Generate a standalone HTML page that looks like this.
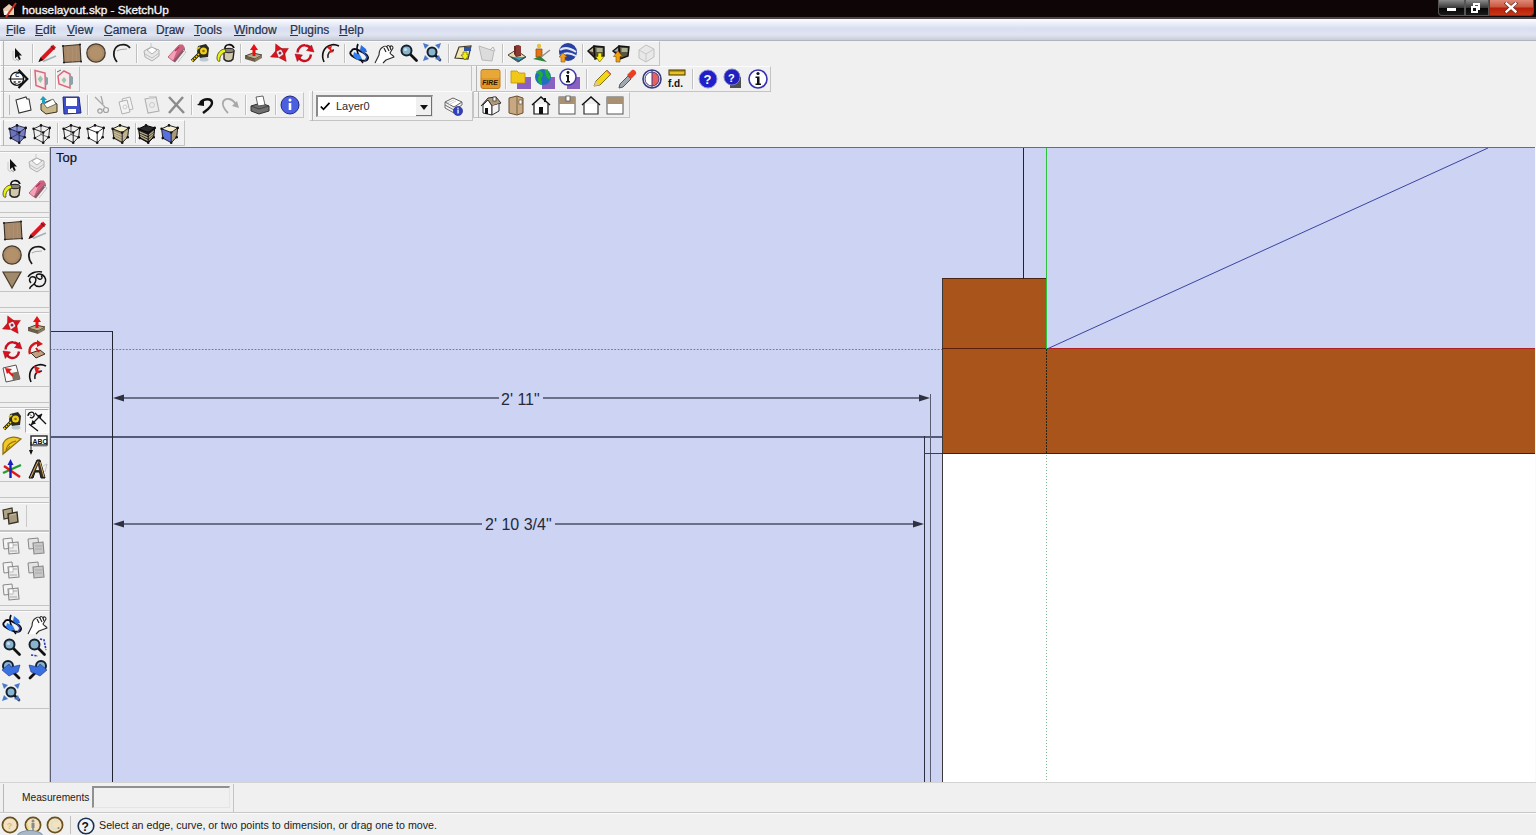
<!DOCTYPE html>
<html><head><meta charset="utf-8">
<style>
*{margin:0;padding:0;box-sizing:border-box}
html,body{width:1536px;height:835px;overflow:hidden;background:#f0f0f0;font-family:"Liberation Sans",sans-serif}
.a{position:absolute}
#title{left:0;top:0;width:1536px;height:19px;background:#0e0507;border-bottom:2px solid #4a4646}
#title .t{left:22px;top:2px;color:#f4f4f4;font-size:11.8px;line-height:16px;white-space:nowrap;-webkit-text-stroke:0.35px #f4f4f4}
#menu{left:0;top:19px;width:1536px;height:22px;background:linear-gradient(#fbfcfe 0%,#f0f3fa 15%,#d9dff0 45%,#e0e4f2 75%,#d4d8e4 88%,#c8ccd6 100%);border-bottom:1px solid #b0b4bc}
#menu span{position:absolute;top:3px;font-size:12px;line-height:16px;color:#26324c;white-space:nowrap;-webkit-text-stroke:0.2px #26324c}
#menu u{text-decoration:underline;text-underline-offset:1px;text-decoration-thickness:1px}
.tb{position:absolute;border-bottom:1px solid #d0d0d0;border-right:1px solid #c8c8c8;background:#f0f0f0}
.hd{position:absolute;width:1px;background:#c0c0c0}
.sep{position:absolute;width:1px;background:#c8c8c8;border-right:1px solid #fff}
#vp{left:50px;top:147px;width:1485px;height:636px;background:#cdd3f3;border-left:1px solid #5a5e70;border-top:1px solid #6a6e78;overflow:hidden}
#left{left:0;top:147px;width:50px;height:636px;background:#f0f0f0}
.lg{position:absolute;left:0;width:49px;border-top:1px solid #c6c6c6;border-bottom:1px solid #d4d4d4}
#status{left:0;top:782px;width:1536px;height:53px;background:#f0f0f0;border-top:1px solid #d4d4d4}
</style></head><body>
<div id="title" class="a">
  <svg class="a" style="left:1px;top:1px" width="17" height="17" viewBox="0 0 17 17">
    <path d="M2 8 L8 3 L13 7 L13 14 L3 14 Z" fill="#e8d0b0"/>
    <path d="M3 10 L7 10 L7 14 L3 14Z" fill="#f0f0f0"/>
    <path d="M5 16 L15 2" stroke="#d03020" stroke-width="2"/>
  </svg>
  <div class="a t">houselayout.skp - SketchUp</div>
  <div class="a" style="left:1438px;top:0;width:27px;height:16px;background:linear-gradient(#8a8a8a,#3a3a3a 50%,#050505 55%,#1a1a1a);border:1px solid #555;border-top:none;border-radius:0 0 0 4px"></div>
  <div class="a" style="left:1447px;top:8px;width:9px;height:3px;background:#fff"></div>
  <div class="a" style="left:1465px;top:0;width:24px;height:16px;background:linear-gradient(#8a8a8a,#3a3a3a 50%,#050505 55%,#1a1a1a);border:1px solid #555;border-top:none"></div>
  <div class="a" style="left:1473px;top:3px;width:7px;height:7px;border:2px solid #fff"></div>
  <div class="a" style="left:1471px;top:6px;width:7px;height:7px;border:2px solid #fff;background:#111"></div>
  <div class="a" style="left:1489px;top:0;width:45px;height:16px;background:linear-gradient(#e08878,#c85a40 45%,#b81e08 55%,#c83818);border:1px solid #6a3a30;border-top:none;border-radius:0 0 4px 0"></div>
  <svg class="a" style="left:1504px;top:2px" width="14" height="11" viewBox="0 0 14 11"><path d="M2.5 1.5 L11.5 9.5 M11.5 1.5 L2.5 9.5" stroke="#602018" stroke-width="3.6" stroke-linecap="square"/><path d="M2.5 1.5 L11.5 9.5 M11.5 1.5 L2.5 9.5" stroke="#fff" stroke-width="2.4" stroke-linecap="square"/></svg>
</div>
<div id="menu" class="a">
  <span style="left:6px"><u>F</u>ile</span>
  <span style="left:35px"><u>E</u>dit</span>
  <span style="left:67px"><u>V</u>iew</span>
  <span style="left:104px"><u>C</u>amera</span>
  <span style="left:156px">D<u>r</u>aw</span>
  <span style="left:194px"><u>T</u>ools</span>
  <span style="left:234px"><u>W</u>indow</span>
  <span style="left:290px"><u>P</u>lugins</span>
  <span style="left:339px"><u>H</u>elp</span>
</div>
<div class="a" style="left:0px;top:41px;width:660px;height:25px;border-top:1px solid #fbfbfb;border-left:1px solid #fbfbfb;border-bottom:1px solid #c4c4c4;border-right:1px solid #c4c4c4"></div>
<div class="a" style="left:3px;top:41px;width:1px;height:25px;background:#b4b4b4"></div>
<div class="a" style="left:32px;top:44px;width:1px;height:19px;background:#c0c0c0"></div>
<div class="a" style="left:33px;top:44px;width:1px;height:19px;background:#fcfcfc"></div>
<div class="a" style="left:136px;top:44px;width:1px;height:19px;background:#c0c0c0"></div>
<div class="a" style="left:137px;top:44px;width:1px;height:19px;background:#fcfcfc"></div>
<div class="a" style="left:240px;top:44px;width:1px;height:19px;background:#c0c0c0"></div>
<div class="a" style="left:241px;top:44px;width:1px;height:19px;background:#fcfcfc"></div>
<div class="a" style="left:344px;top:44px;width:1px;height:19px;background:#c0c0c0"></div>
<div class="a" style="left:345px;top:44px;width:1px;height:19px;background:#fcfcfc"></div>
<div class="a" style="left:448px;top:44px;width:1px;height:19px;background:#c0c0c0"></div>
<div class="a" style="left:449px;top:44px;width:1px;height:19px;background:#fcfcfc"></div>
<div class="a" style="left:502px;top:44px;width:1px;height:19px;background:#c0c0c0"></div>
<div class="a" style="left:503px;top:44px;width:1px;height:19px;background:#fcfcfc"></div>
<div class="a" style="left:582px;top:44px;width:1px;height:19px;background:#c0c0c0"></div>
<div class="a" style="left:583px;top:44px;width:1px;height:19px;background:#fcfcfc"></div>
<svg class="a" style="left:5.6px;top:42px" width="22" height="22" viewBox="0 0 22 22"><path d="M9 6 L9 16.5 L11.3 14.3 L13 18 L14.8 17.2 L13.1 13.6 L16 13.4 Z" fill="#111"/><path d="M7 9 L7 17 L10 19" stroke="#c8c8c8" stroke-width="1" fill="none"/><path d="M10 17 L13 19" stroke="#999" stroke-width="1"/></svg>
<svg class="a" style="left:35.5px;top:42px" width="22" height="22" viewBox="0 0 22 22"><path d="M2.5 20 L4.5 15.5 L17 2.5 L20 5.5 L7.5 18 Z" fill="#d81820"/><path d="M2.5 20 L4.5 15.5 L7.5 18Z" fill="#201010"/><path d="M5 15 L17 3" stroke="#ff6070" stroke-width=".8"/><path d="M15 4 L18.5 7.5" stroke="#6a2020" stroke-width="1.2"/><path d="M7 19.5 L20 14" stroke="#a0b4b4" stroke-width="1.5"/></svg>
<svg class="a" style="left:59.8px;top:42px" width="22" height="22" viewBox="0 0 22 22"><path d="M3 4 L20 2.5 L21 19.5 L4 20.5 Z" fill="#a88a6a" stroke="#3a3026" stroke-width="1.1"/><path d="M8 5 V19 M12.5 4.5 V19.5 M16.5 4 V19" stroke="#ae9070" stroke-width="1"/><circle cx="3" cy="4" r="1.1" fill="#222"/><circle cx="20" cy="2.5" r="1.1" fill="#222"/><circle cx="21" cy="19.5" r="1.1" fill="#222"/><circle cx="4" cy="20.5" r="1.1" fill="#222"/></svg>
<svg class="a" style="left:85px;top:42px" width="22" height="22" viewBox="0 0 22 22"><circle cx="11" cy="11" r="9.2" fill="#a88a68" stroke="#4a3c2c" stroke-width="1.3"/><circle cx="11" cy="11" r="6.5" fill="#b8946c" opacity=".7"/></svg>
<svg class="a" style="left:110.7px;top:42px" width="22" height="22" viewBox="0 0 22 22"><path d="M6 20 C1 14 2 5 9 3 C13 2 17 3 19 6" fill="none" stroke="#1a1a1a" stroke-width="1.8"/><path d="M6 9 C9 7 13 7 16 7" stroke="#aaa" stroke-width="1.2" fill="none"/></svg>
<svg class="a" style="left:140.5px;top:42px" width="22" height="22" viewBox="0 0 22 22"><path d="M3 9 L10 5 L18 8 L18 14 L11 19 L4 15 Z" fill="#e8e8e8" stroke="#b0b0b0" stroke-width="1"/><path d="M6 8 L11 5 L16 8 L11 12 Z" fill="#fff" stroke="#a8a8a8" stroke-width=".9"/><path d="M4 12 L11 16 L18 11" stroke="#c0c0c0" fill="none" stroke-width="1"/><path d="M10 1 V6" stroke="#c8c8c8" stroke-width="1"/></svg>
<svg class="a" style="left:165px;top:42px" width="22" height="22" viewBox="0 0 22 22"><path d="M3 15 L14 3 L18 3 L8 19 Z" fill="#f4a0b8" stroke="#c06880" stroke-width="1"/><path d="M14 3 L18 3 L19.5 5 L9.5 20 L8 19 Z" fill="#d06080"/><path d="M8 19 L19.5 5 L20 8 L10 20.5Z" fill="#8a5a68"/><path d="M10 9 L14 5" stroke="#b03058" stroke-width="1.6"/><path d="M18 8 L21 10 L13 20" stroke="#c0c8c8" stroke-width="1" fill="none"/></svg>
<svg class="a" style="left:189px;top:42px" width="22" height="22" viewBox="0 0 22 22"><path d="M9 4 L17 2 L20 6 L19 15 L11 16 L8 10Z" fill="#2a2a22"/><circle cx="14.5" cy="9" r="3.5" fill="#f0d018"/><circle cx="14.5" cy="9" r="1.3" fill="#907010"/><path d="M10 12 L3 19" stroke="#202010" stroke-width="3.4"/><path d="M10 12 L3 19" stroke="#f0d020" stroke-width="1.8" stroke-dasharray="1.6,1.1"/><ellipse cx="15" cy="17.5" rx="4.5" ry="2" fill="#a8b8c8" opacity=".7"/><path d="M8 7 L11 5" stroke="#d8c010" stroke-width="2"/></svg>
<svg class="a" style="left:214.7px;top:42px" width="22" height="22" viewBox="0 0 22 22"><path d="M9 8 C12 6 17 6 19 9 L18 17 C16 20 11 20 9 17 Z" fill="#d0c8a8" stroke="#222" stroke-width="1.4"/><ellipse cx="14" cy="8.5" rx="5" ry="2.2" fill="#888070" stroke="#222" stroke-width="1"/><path d="M10 7 C9 2 17 1 19 6" fill="none" stroke="#111" stroke-width="1.7"/><path d="M10 7 C6 7 2 11 2 16 C2 19 4 20 5 19 C4 15 7 11 11 10Z" fill="#e8f020" stroke="#404010" stroke-width=".8"/></svg>
<svg class="a" style="left:243.4px;top:42px" width="22" height="22" viewBox="0 0 22 22"><path d="M2 14 L10 11 L19 13 L12 17 Z" fill="#b8aa88" stroke="#4a4030" stroke-width="1"/><path d="M2 14 L12 17 L12 20 L2 17 Z" fill="#6a5e48"/><path d="M12 17 L19 13 L19 16 L12 20Z" fill="#857860"/><path d="M11 2 L15 8 L12.5 8 L12.5 14 L9.5 14 L9.5 8 L7 8 Z" fill="#e81010"/></svg>
<svg class="a" style="left:269px;top:42px" width="22" height="22" viewBox="0 0 22 22"><path d="M6.7 1.9 L13.0 6.7 L6.5 9.8 Z M19.4 6.4 L15.2 12.8 L11.8 6.5 Z M17.2 19.4 L10.0 15.7 L15.8 11.4 Z M1.5 14.9 L6.8 8.8 L9.5 15.5 Z " fill="#e01018" stroke="#901018" stroke-width=".5"/><circle cx="11" cy="11" r="1.5" fill="#803050"/></svg>
<svg class="a" style="left:293px;top:42px" width="22" height="22" viewBox="0 0 22 22"><path d="M4.5 10.5 C5 5 9 3 12 3.3 C15 3.5 17 5 18 7" fill="none" stroke="#c81020" stroke-width="2.4"/><path d="M18 12.5 C17.5 17 14 19.5 10.5 19 C8.5 18.7 7 17.5 6 16" fill="none" stroke="#c81020" stroke-width="2.4"/><path d="M18.5 3 L21 10 L13.5 8.5Z M2 12 L9.5 13 L4.3 19.5Z" fill="#d81020" stroke="#901018" stroke-width=".5"/></svg>
<svg class="a" style="left:318.6px;top:42px" width="22" height="22" viewBox="0 0 22 22"><path d="M5 20 C2 13 4 5 12 3 C15 2 18 3 20 4" fill="none" stroke="#111" stroke-width="1.6"/><path d="M9 16 C8 12 11 8 15 8" fill="none" stroke="#222" stroke-width="1.5"/><path d="M7 5 L13 4 L12 7 L15 10 L10 11 L11 8Z" fill="#e01818"/></svg>
<svg class="a" style="left:347.8px;top:42px" width="22" height="22" viewBox="0 0 22 22"><path d="M4 8 C6 4 11 8 15 11 C19 14 21 17 18 19 C15 21 7 16 4 13 C2 11 2 9 4 8Z" fill="none" stroke="#0a0a18" stroke-width="1.9" transform="rotate(-8 11 12)"/><path d="M10 2 C8 6 9 10 11 14 C12 17 13 19 15 21" fill="none" stroke="#0a0a18" stroke-width="1.7"/><path d="M6 10 L12 13 L14 17 L9 18 L5 14Z" fill="#3080f0"/><path d="M13 3 L18 7 L19 10 L15 11 L12 8Z" fill="#2a70e0"/><path d="M16 11 L19 15 L17 19" fill="none" stroke="#3050a0" stroke-width="1.5"/></svg>
<svg class="a" style="left:373px;top:42px" width="22" height="22" viewBox="0 0 22 22"><path d="M2 21 L6 13 C6 9 8 6 10 5 C11 4 13 4 14 5 C14 3 16 3 17 5 C18 3 20 4 20 6 L17 11 C18 13 20 13 21 15 L13 18 L10 21" fill="#fff" stroke="#2a2a2a" stroke-width="1.1" stroke-linejoin="round"/><path d="M11 6 L13 10 M14 5 L16 9 M17 5 L18 8" stroke="#2a2a2a" stroke-width="1.2"/></svg>
<svg class="a" style="left:397.5px;top:42px" width="22" height="22" viewBox="0 0 22 22"><path d="M12 12 L18.5 18.5" stroke="#111" stroke-width="2.8" stroke-linecap="round"/><circle cx="8.5" cy="8.5" r="5" fill="#88b4cc" stroke="#142030" stroke-width="2"/><circle cx="7.5" cy="7.5" r="1.6" fill="#c8e0ec"/></svg>
<svg class="a" style="left:422px;top:42px" width="22" height="22" viewBox="0 0 22 22"><path d="M12 12 L18 18" stroke="#111" stroke-width="2.6" stroke-linecap="round"/><circle cx="10" cy="10" r="4.5" fill="#88b4cc" stroke="#142030" stroke-width="2"/><path d="M1 1 L7 3 L3 7Z M19 1 L17 7 L13 3Z M1 19 L3 13 L7 17Z M19 19 L13 17 L17 13Z" fill="#4a78c8"/></svg>
<svg class="a" style="left:451.7px;top:42px" width="22" height="22" viewBox="0 0 22 22"><path d="M3 16 L7 5 L19 4 L16 17 Z" fill="#f4e8b0" stroke="#403a2a" stroke-width="1.2"/><rect x="12" y="5" width="7" height="4" fill="#3050a0"/><path d="M11 10 L15 10 L15 13 L17 13 L13 18 L9 13 L11 13Z" fill="#f0f010" stroke="#505000" stroke-width=".6"/></svg>
<svg class="a" style="left:476px;top:42px" width="22" height="22" viewBox="0 0 22 22"><path d="M3 4 L18 9 L16 19 L6 18 Z" fill="#dcdcdc" stroke="#b8b8b8" stroke-width="1"/><path d="M14 8 L17 5 L19 9" fill="none" stroke="#b0b0b0" stroke-width="1"/></svg>
<svg class="a" style="left:506px;top:42px" width="22" height="22" viewBox="0 0 22 22"><path d="M2 13 L10 8 L20 15 L12 20Z" fill="#e8dcb0" stroke="#504030" stroke-width="1"/><path d="M5 15 L13 19 L19 15" fill="#40a0b8" stroke="#206070" stroke-width="1.5"/><path d="M8 4 L13 3 L15 6 L15 14 L10 15 L8 12Z" fill="#6a2a24"/><path d="M10 3 L15 4 L15 13 L10 14Z" fill="#8a3a32"/></svg>
<svg class="a" style="left:530px;top:42px" width="22" height="22" viewBox="0 0 22 22"><circle cx="9" cy="4" r="2.2" fill="#e8c040"/><path d="M6 7 L12 7 L12 15 L6 15Z" fill="#e87010" stroke="#905010" stroke-width=".8"/><path d="M3 17 L10 14 L17 20 L12 19Z" fill="#308040"/><path d="M11 15 L20 8" stroke="#909090" stroke-width="1.5"/></svg>
<svg class="a" style="left:555.7px;top:42px" width="22" height="22" viewBox="0 0 22 22"><circle cx="12" cy="10" r="9" fill="#2840a0"/><path d="M4 8 C8 5 14 6 20 10 M5 13 C10 10 15 11 20 14" stroke="#dfe8f8" stroke-width="2" fill="none"/><path d="M7 11 L11 15 L9 15 L9 20 L5 20 L5 15 L3 15Z" fill="#f0a020" stroke="#a05000" stroke-width=".6"/></svg>
<svg class="a" style="left:585.6px;top:42px" width="22" height="22" viewBox="0 0 22 22"><path d="M2 9 L8 4 L12 6 L8 15Z" fill="#4a4030" stroke="#111" stroke-width="1.4"/><path d="M8 4 L18 5 L18 14 L9 17Z" fill="#5a5440" stroke="#111" stroke-width="1.4"/><rect x="10.5" y="6" width="6" height="4" fill="#a8b090"/><path d="M3 9 L7 6 L7 10Z" fill="#c0b498"/><path d="M12 11 L15.5 11 L15.5 14.5 L18 14.5 L13.7 20 L9.5 14.5 L12 14.5Z" fill="#f8f010" stroke="#605000" stroke-width=".6"/></svg>
<svg class="a" style="left:610px;top:42px" width="22" height="22" viewBox="0 0 22 22"><path d="M3 9 L9 4 L12 6 L9 14Z" fill="#4a4030" stroke="#111" stroke-width="1.4"/><path d="M9 4 L19 5 L18 14 L10 17Z" fill="#5a5440" stroke="#111" stroke-width="1.4"/><rect x="11.5" y="6" width="6" height="4" fill="#a8b090"/><path d="M4 9 L8 6 L8 10Z" fill="#a0a8c0"/><path d="M8 9 L12.5 14.5 L10 14.5 L10 20 L6 20 L6 14.5 L3.5 14.5Z" fill="#f0a010" stroke="#805000" stroke-width=".6"/></svg>
<svg class="a" style="left:635px;top:42px" width="22" height="22" viewBox="0 0 22 22"><path d="M4 8 L11 3 L19 7 L19 15 L11 20 L4 16Z" fill="#e8e8e8" stroke="#c0c0c0" stroke-width="1"/><path d="M4 8 L11 12 L19 7 M11 12 L11 20" stroke="#c8c8c8" stroke-width="1" fill="none"/></svg>
<div class="a" style="left:0px;top:66px;width:80px;height:26px;border-top:1px solid #fbfbfb;border-left:1px solid #fbfbfb;border-bottom:1px solid #c4c4c4;border-right:1px solid #c4c4c4"></div>
<div class="a" style="left:3px;top:66px;width:1px;height:26px;background:#b4b4b4"></div>
<div class="a" style="left:30px;top:69px;width:1px;height:20px;background:#c0c0c0"></div>
<div class="a" style="left:31px;top:69px;width:1px;height:20px;background:#fcfcfc"></div>
<div class="a" style="left:55px;top:69px;width:1px;height:20px;background:#c0c0c0"></div>
<div class="a" style="left:56px;top:69px;width:1px;height:20px;background:#fcfcfc"></div>
<svg class="a" style="left:6.7px;top:68px" width="22" height="22" viewBox="0 0 22 22"><circle cx="10" cy="10.8" r="6.6" fill="#fff" stroke="#111" stroke-width="1.3"/><path d="M1.5 11 H17" stroke="#111" stroke-width="1.1"/><path d="M11.5 1.8 L20.3 11 L11.5 20" fill="none" stroke="#111" stroke-width="2.2"/><text x="8.3" y="9.3" font-size="5.5" font-family="Liberation Sans" font-weight="bold" fill="#111">C</text><text x="6.2" y="16.6" font-size="5" font-family="Liberation Sans" font-weight="bold" fill="#111">8-S</text></svg>
<svg class="a" style="left:31px;top:68px" width="22" height="22" viewBox="0 0 22 22"><path d="M4 2.5 L14 5 L14.5 21 L5 17.5 Z" fill="#f8e8ec" stroke="#d86878" stroke-width="1.5"/><path d="M6.5 11 L9.5 7.5 L12 11 L9.5 15Z" fill="#98c8b0"/><path d="M14.5 8 L17 10 L17 16 L14.5 18Z" fill="#90a0a8"/></svg>
<svg class="a" style="left:55.4px;top:68px" width="22" height="22" viewBox="0 0 22 22"><path d="M3 8 L9 3 L15 6 L15 20 L4 16 Z" fill="#f8e8ec" stroke="#d86878" stroke-width="1.5"/><path d="M6.5 12 L9 9 L11.5 12 L9 15.5Z" fill="#98c8b0"/><path d="M15 7 L18 9 L18 16 L15 18Z" fill="#90a0a8"/><path d="M2 4 L6 2" stroke="#507080" stroke-width="1"/></svg>
<div class="a" style="left:471px;top:66px;width:300px;height:26px;border-top:1px solid #fbfbfb;border-left:1px solid #fbfbfb;border-bottom:1px solid #c4c4c4;border-right:1px solid #c4c4c4"></div>
<div class="a" style="left:476px;top:66px;width:1px;height:26px;background:#b4b4b4"></div>
<div class="a" style="left:471px;top:66px;width:1px;height:26px;background:#c4c4c4"></div>
<div class="a" style="left:505px;top:69px;width:1px;height:20px;background:#c0c0c0"></div>
<div class="a" style="left:506px;top:69px;width:1px;height:20px;background:#fcfcfc"></div>
<div class="a" style="left:586px;top:69px;width:1px;height:20px;background:#c0c0c0"></div>
<div class="a" style="left:587px;top:69px;width:1px;height:20px;background:#fcfcfc"></div>
<div class="a" style="left:692px;top:69px;width:1px;height:20px;background:#c0c0c0"></div>
<div class="a" style="left:693px;top:69px;width:1px;height:20px;background:#fcfcfc"></div>
<svg class="a" style="left:479px;top:68px" width="22" height="22" viewBox="0 0 22 22"><rect x="2" y="1.5" width="19" height="19" rx="2" fill="#e09828" stroke="#c07818" stroke-width="1"/><rect x="2.5" y="2" width="18" height="8" rx="1.5" fill="#e8a838"/><text x="3.2" y="17" font-size="6.8" font-weight="bold" font-style="italic" font-family="Liberation Sans" fill="#2a1400">FIRE</text></svg>
<svg class="a" style="left:510px;top:68px" width="22" height="22" viewBox="0 0 22 22"><rect x="7" y="9" width="14" height="12" fill="#8a60c0"/><path d="M1 3 L7 3 L9 5 L15 5 L15 15 L1 15Z" fill="#f0c818" stroke="#c09010" stroke-width=".8"/></svg>
<svg class="a" style="left:533.5px;top:68px" width="22" height="22" viewBox="0 0 22 22"><rect x="8" y="9" width="13" height="12" fill="#8a60c0"/><circle cx="9" cy="9" r="8" fill="#2070c0"/><path d="M3 5 C6 3 9 6 6 9 C4 12 8 14 6 16 M12 2 C14 5 12 8 16 10" stroke="#20b030" stroke-width="3.2" fill="none"/></svg>
<svg class="a" style="left:559px;top:68px" width="22" height="22" viewBox="0 0 22 22"><rect x="8" y="9" width="13" height="12" fill="#8a60c0"/><circle cx="9" cy="9" r="8" fill="#fff" stroke="#4038a0" stroke-width="1.5"/><circle cx="9" cy="4.5" r="1.4" fill="#111"/><path d="M7 7 H10 V13 H11 V14.5 H7 V13 H8 V8.5 H7Z" fill="#111"/></svg>
<svg class="a" style="left:591px;top:68px" width="22" height="22" viewBox="0 0 22 22"><path d="M3 18 L5 13 L16 2 L20 6 L9 17 Z" fill="#f0d818" stroke="#807010" stroke-width="1"/><path d="M15 3 L19 7 L20 6 L16 2Z" fill="#e87060"/><path d="M3 18 L5 13 L9 17Z" fill="#e8c890"/></svg>
<svg class="a" style="left:616px;top:68px" width="22" height="22" viewBox="0 0 22 22"><path d="M3 20 L4 16 L12 8 L15 11 L7 19Z" fill="#a0a8b0" stroke="#505860" stroke-width="1"/><path d="M11 7 L16 2 C18 1 21 4 20 6 L15 11Z" fill="#e84020"/></svg>
<svg class="a" style="left:640.6px;top:68px" width="22" height="22" viewBox="0 0 22 22"><circle cx="11" cy="11" r="9" fill="#fff" stroke="#3a3a80" stroke-width="1.6"/><path d="M11 4 A7 7 0 0 1 11 18Z" fill="#e86060"/><path d="M11 2 V20" stroke="#3a3a80" stroke-width="1"/><circle cx="11" cy="11" r="7" fill="none" stroke="#3a3a80" stroke-width="1"/></svg>
<svg class="a" style="left:665.7px;top:68px" width="22" height="22" viewBox="0 0 22 22"><rect x="3" y="2" width="16" height="5" fill="#e8c020" stroke="#403000" stroke-width="1"/><path d="M5 2 V4 M7 2 V4 M9 2 V4 M11 2 V4 M13 2 V4 M15 2 V4 M17 2 V4" stroke="#403000" stroke-width=".6"/><text x="2" y="19" font-size="10" font-weight="bold" font-family="Liberation Sans" fill="#111">f.d.</text></svg>
<svg class="a" style="left:696.5px;top:68px" width="22" height="22" viewBox="0 0 22 22"><circle cx="11" cy="11" r="9" fill="#2020c8" stroke="#9090e0" stroke-width="1"/><text x="6.5" y="16" font-size="13" font-weight="bold" font-family="Liberation Sans" fill="#fff">?</text></svg>
<svg class="a" style="left:721.6px;top:68px" width="22" height="22" viewBox="0 0 22 22"><rect x="8" y="9" width="11" height="11" fill="#505050"/><circle cx="10" cy="9" r="8" fill="#2020c0" stroke="#8080c0" stroke-width="1"/><text x="6" y="14" font-size="11" font-weight="bold" font-family="Liberation Sans" fill="#fff">?</text></svg>
<svg class="a" style="left:746.6px;top:68px" width="22" height="22" viewBox="0 0 22 22"><circle cx="11" cy="11" r="9" fill="#fff" stroke="#3830b0" stroke-width="1.6"/><circle cx="11" cy="5.5" r="1.6" fill="#111"/><path d="M8.5 8.5 H12.5 V15.5 H14 V17 H8.5 V15.5 H10 V10 H8.5Z" fill="#111"/></svg>
<div class="a" style="left:0px;top:92px;width:304px;height:26px;border-top:1px solid #fbfbfb;border-left:1px solid #fbfbfb;border-bottom:1px solid #c4c4c4;border-right:1px solid #c4c4c4"></div>
<div class="a" style="left:3px;top:92px;width:1px;height:26px;background:#b4b4b4"></div>
<div class="a" style="left:87px;top:95px;width:1px;height:20px;background:#c0c0c0"></div>
<div class="a" style="left:88px;top:95px;width:1px;height:20px;background:#fcfcfc"></div>
<div class="a" style="left:191px;top:95px;width:1px;height:20px;background:#c0c0c0"></div>
<div class="a" style="left:192px;top:95px;width:1px;height:20px;background:#fcfcfc"></div>
<div class="a" style="left:245px;top:95px;width:1px;height:20px;background:#c0c0c0"></div>
<div class="a" style="left:246px;top:95px;width:1px;height:20px;background:#fcfcfc"></div>
<div class="a" style="left:275px;top:95px;width:1px;height:20px;background:#c0c0c0"></div>
<div class="a" style="left:276px;top:95px;width:1px;height:20px;background:#fcfcfc"></div>
<svg class="a" style="left:12px;top:94px" width="22" height="22" viewBox="0 0 22 22"><path d="M4 6 L14 3 L15 5 L17 5 L19 16 L7 19 Z" fill="#fff" stroke="#333" stroke-width="1.1"/></svg>
<svg class="a" style="left:37.7px;top:94px" width="22" height="22" viewBox="0 0 22 22"><path d="M3 10 L13 6 L19 10 L19 18 L8 20 L3 16Z" fill="#c8b888" stroke="#3a3020" stroke-width="1"/><path d="M6 10 L15 5 L18 10 L9 14Z" fill="#fff" stroke="#555" stroke-width=".8"/><path d="M5 2 L9 6 L7 6 L7 10 L4 10 L4 6 L2 6Z" fill="#20a0c0"/></svg>
<svg class="a" style="left:61px;top:94px" width="22" height="22" viewBox="0 0 22 22"><path d="M2 3 L18 3 L20 19 L3 20Z" fill="#4050c8" stroke="#202880" stroke-width="1"/><rect x="5" y="4" width="11" height="8" fill="#fff"/><rect x="7" y="15" width="8" height="4" fill="#fff"/></svg>
<svg class="a" style="left:90.8px;top:94px" width="22" height="22" viewBox="0 0 22 22"><path d="M4 3 L14 13 M10 2 L12 10" stroke="#a8a8a8" stroke-width="1.3"/><circle cx="15" cy="16" r="2.5" fill="none" stroke="#a0a0a0" stroke-width="1.2"/><circle cx="9" cy="17" r="2.2" fill="none" stroke="#a0a0a0" stroke-width="1.2"/></svg>
<svg class="a" style="left:116px;top:94px" width="22" height="22" viewBox="0 0 22 22"><path d="M6 5 L14 3 L17 15 L9 17Z" fill="#f4f4f4" stroke="#b4b4b4" stroke-width="1"/><path d="M3 8 L11 6 L14 18 L6 20Z" fill="#f4f4f4" stroke="#b0b0b0" stroke-width="1"/><circle cx="9" cy="13" r="2" fill="none" stroke="#c0c0c0" stroke-width=".8"/></svg>
<svg class="a" style="left:140.5px;top:94px" width="22" height="22" viewBox="0 0 22 22"><path d="M4 5 L15 3 L18 17 L7 19Z" fill="#ececec" stroke="#b0b0b0" stroke-width="1.1"/><rect x="8" y="2" width="5" height="3" fill="#d0d0d0"/><circle cx="11" cy="11" r="2.5" fill="none" stroke="#c0c0c0" stroke-width=".8"/></svg>
<svg class="a" style="left:165px;top:94px" width="22" height="22" viewBox="0 0 22 22"><path d="M4 3 L19 19 M18 3 L4 19" stroke="#8c8c8c" stroke-width="2.5"/></svg>
<svg class="a" style="left:194.8px;top:94px" width="22" height="22" viewBox="0 0 22 22"><path d="M5 9 C9 4 17 4 17 9 C17 13 12 16 8 19" fill="none" stroke="#111" stroke-width="2.4"/><path d="M2 11 L9 5 L9 12Z" fill="#111"/></svg>
<svg class="a" style="left:219px;top:94px" width="22" height="22" viewBox="0 0 22 22"><path d="M17 11 C14 4 6 3 4 8 C3 12 6 16 9 19" fill="none" stroke="#a8a8a8" stroke-width="1.8"/><path d="M20 14 L13 12 L18 7Z" fill="#a8a8a8"/></svg>
<svg class="a" style="left:249px;top:94px" width="22" height="22" viewBox="0 0 22 22"><path d="M2 12 L12 9 L20 12 L20 17 L10 20 L2 17Z" fill="#707070" stroke="#303030" stroke-width="1"/><path d="M7 3 L14 2 L16 11 L9 12Z" fill="#fff" stroke="#404040" stroke-width=".8"/><path d="M2 12 L10 15 L20 12" stroke="#404040" fill="none" stroke-width="1"/></svg>
<svg class="a" style="left:279px;top:94px" width="22" height="22" viewBox="0 0 22 22"><circle cx="11" cy="11" r="9" fill="#4a60e0" stroke="#202880" stroke-width="1"/><circle cx="11" cy="6" r="1.5" fill="#fff"/><rect x="9.7" y="9" width="2.6" height="7" fill="#fff"/></svg>
<div class="a" style="left:9px;top:95px;width:1px;height:20px;background:#b8b8b8"></div>
<div class="a" style="left:309px;top:91px;width:164px;height:30px;border-top:1px solid #fbfbfb;border-left:1px solid #fbfbfb;border-bottom:1px solid #c4c4c4;border-right:1px solid #c4c4c4"></div>
<div class="a" style="left:312px;top:91px;width:1px;height:30px;background:#b4b4b4"></div>
<svg class="a" style="left:443px;top:95px" width="22" height="22" viewBox="0 0 22 22"><path d="M2 7 L10 3 L19 7 L11 12Z" fill="#fff" stroke="#606060" stroke-width="1"/><path d="M2 7 L2 10 L11 15 L19 10 L19 7" fill="none" stroke="#707070" stroke-width="1"/><path d="M2 10 L2 13 L11 18 L14 16" fill="none" stroke="#707070" stroke-width="1"/><path d="M4 8 L11 5 M5 10 L13 6" stroke="#c0c0c0" stroke-width=".8"/><circle cx="15" cy="16" r="4.6" fill="#3040c0" stroke="#202880" stroke-width=".6"/><rect x="14.3" y="14.5" width="1.5" height="4" fill="#e0e8ff"/><circle cx="15" cy="13.2" r=".8" fill="#e0e8ff"/></svg>
<div class="a" style="left:316px;top:95px;width:117px;height:22px;background:#fff;border-top:2px solid #8a8a8a;border-left:2px solid #8a8a8a;border-right:1px solid #e0e0e0;border-bottom:1px solid #e0e0e0"></div>
<div class="a" style="left:416px;top:97px;width:16px;height:19px;background:#f0f0f0;border-right:1px solid #707070;border-bottom:1px solid #707070"></div>
<div class="a" style="left:419.5px;top:105px;width:0;height:0;border-left:4.5px solid transparent;border-right:4.5px solid transparent;border-top:5px solid #111"></div>
<svg class="a" style="left:319px;top:100px" width="12" height="12" viewBox="0 0 12 12"><path d="M1.8 6.5 L4.5 9.3 L10.5 2.8" fill="none" stroke="#000" stroke-width="1.7"/></svg>
<div class="a" style="left:336px;top:98px;font-size:11px;line-height:16px;color:#2a2a2a">Layer0</div>
<div class="a" style="left:473px;top:92px;width:157px;height:26px;border-top:1px solid #fbfbfb;border-left:1px solid #fbfbfb;border-bottom:1px solid #c4c4c4;border-right:1px solid #c4c4c4"></div>
<div class="a" style="left:478px;top:92px;width:1px;height:26px;background:#b4b4b4"></div>
<div class="a" style="left:473px;top:92px;width:1px;height:26px;background:#c4c4c4"></div>
<svg class="a" style="left:480.4px;top:94px" width="22" height="22" viewBox="0 0 22 22"><path d="M1 12 L8 4 L16 3 L21 9 L12 12 L8 6Z" fill="#b0987a" stroke="#333" stroke-width="1"/><path d="M3 11 L3 19 L12 21 L12 12 L8 6Z" fill="#fff" stroke="#333" stroke-width="1"/><path d="M12 12 L12 21 L19 17 L19 10" fill="#f4f4f4" stroke="#333" stroke-width="1"/><rect x="5" y="14" width="3" height="6" fill="#111"/><rect x="13" y="3" width="3" height="4" fill="#fff" stroke="#333" stroke-width=".7"/></svg>
<svg class="a" style="left:504.7px;top:94px" width="22" height="22" viewBox="0 0 22 22"><path d="M4 4 L12 2 L18 4 L18 19 L12 21 L4 19Z" fill="#c8a880" stroke="#6a5030" stroke-width="1"/><path d="M12 2 V21" stroke="#7a6040" stroke-width="1"/><rect x="14" y="6" width="3" height="4" fill="#fff" stroke="#444" stroke-width=".6"/></svg>
<svg class="a" style="left:530px;top:94px" width="22" height="22" viewBox="0 0 22 22"><path d="M2 11 L11 3 L20 11" fill="none" stroke="#111" stroke-width="1.5"/><path d="M4 10 L4 20 L18 20 L18 10" fill="#fff" stroke="#111" stroke-width="1.2"/><rect x="9" y="13" width="4" height="7" fill="#111"/><rect x="14" y="4" width="2" height="4" fill="#111"/></svg>
<svg class="a" style="left:555.6px;top:94px" width="22" height="22" viewBox="0 0 22 22"><rect x="3" y="3" width="16" height="17" fill="#fff" stroke="#555" stroke-width="1"/><rect x="3" y="3" width="16" height="7" fill="#a89070"/><rect x="10" y="2" width="4" height="5" fill="#fff" stroke="#555" stroke-width=".8"/></svg>
<svg class="a" style="left:580px;top:94px" width="22" height="22" viewBox="0 0 22 22"><path d="M2 11 L11 3 L20 11" fill="none" stroke="#111" stroke-width="1.5"/><path d="M4 10 L4 20 L18 20 L18 10" fill="#fff" stroke="#333" stroke-width="1.2"/></svg>
<svg class="a" style="left:604px;top:94px" width="22" height="22" viewBox="0 0 22 22"><rect x="3" y="3" width="16" height="17" fill="#fff" stroke="#555" stroke-width="1"/><rect x="3" y="3" width="16" height="7" fill="#a89070"/></svg>
<div class="a" style="left:0px;top:120px;width:185px;height:26px;border-top:1px solid #fbfbfb;border-left:1px solid #fbfbfb;border-bottom:1px solid #c4c4c4;border-right:1px solid #c4c4c4"></div>
<div class="a" style="left:3px;top:120px;width:1px;height:26px;background:#b4b4b4"></div>
<div class="a" style="left:57px;top:123px;width:1px;height:20px;background:#c0c0c0"></div>
<div class="a" style="left:58px;top:123px;width:1px;height:20px;background:#fcfcfc"></div>
<div class="a" style="left:135px;top:123px;width:1px;height:20px;background:#c0c0c0"></div>
<div class="a" style="left:136px;top:123px;width:1px;height:20px;background:#fcfcfc"></div>
<svg class="a" style="left:6.7px;top:122px" width="22" height="22" viewBox="0 0 22 22"><polygon points="10,3.4 18.7,5.9 12.2,10.5 2.6,6.8" fill="#8a94d8"/><polygon points="2.6,6.8 12.2,10.5 12.2,20.7 3.8,16.1" fill="#6a74b8"/><polygon points="12.2,10.5 18.7,5.9 17.7,15.2 12.2,20.7" fill="#7880c0"/><polyline points="3.8,16.1 10,12.5 17.7,15.2" fill="none" stroke="#2a2a50" stroke-width=".7"/><polyline points="10,3.4 10,12.5" fill="none" stroke="#2a2a50" stroke-width=".7"/><polygon points="10,3.4 18.7,5.9 17.7,15.2 12.2,20.7 3.8,16.1 2.6,6.8" fill="none" stroke="#2a2a50" stroke-width="1"/><polyline points="2.6,6.8 12.2,10.5 18.7,5.9" fill="none" stroke="#2a2a50" stroke-width="1"/><polyline points="12.2,10.5 12.2,20.7" fill="none" stroke="#2a2a50" stroke-width="1"/><circle cx="10" cy="3.4" r="1.3" fill="#111"/><circle cx="2.6" cy="6.8" r="1.3" fill="#111"/><circle cx="18.7" cy="5.9" r="1.3" fill="#111"/><circle cx="12.2" cy="10.5" r="1.3" fill="#111"/><circle cx="3.8" cy="16.1" r="1.3" fill="#111"/><circle cx="17.7" cy="15.2" r="1.3" fill="#111"/><circle cx="12.2" cy="20.7" r="1.3" fill="#111"/></svg>
<svg class="a" style="left:31px;top:122px" width="22" height="22" viewBox="0 0 22 22"><polygon points="10,3.4 18.7,5.9 12.2,10.5 2.6,6.8" fill="none"/><polygon points="2.6,6.8 12.2,10.5 12.2,20.7 3.8,16.1" fill="none"/><polygon points="12.2,10.5 18.7,5.9 17.7,15.2 12.2,20.7" fill="none"/><polyline points="3.8,16.1 10,12.5 17.7,15.2" fill="none" stroke="#333" stroke-width=".7"/><polyline points="10,3.4 10,12.5" fill="none" stroke="#333" stroke-width=".7"/><polygon points="10,3.4 18.7,5.9 17.7,15.2 12.2,20.7 3.8,16.1 2.6,6.8" fill="none" stroke="#333" stroke-width="1"/><polyline points="2.6,6.8 12.2,10.5 18.7,5.9" fill="none" stroke="#333" stroke-width="1"/><polyline points="12.2,10.5 12.2,20.7" fill="none" stroke="#333" stroke-width="1"/><circle cx="10" cy="3.4" r="1.3" fill="#111"/><circle cx="2.6" cy="6.8" r="1.3" fill="#111"/><circle cx="18.7" cy="5.9" r="1.3" fill="#111"/><circle cx="12.2" cy="10.5" r="1.3" fill="#111"/><circle cx="3.8" cy="16.1" r="1.3" fill="#111"/><circle cx="17.7" cy="15.2" r="1.3" fill="#111"/><circle cx="12.2" cy="20.7" r="1.3" fill="#111"/></svg>
<svg class="a" style="left:61px;top:122px" width="22" height="22" viewBox="0 0 22 22"><polygon points="10,3.4 18.7,5.9 12.2,10.5 2.6,6.8" fill="none"/><polygon points="2.6,6.8 12.2,10.5 12.2,20.7 3.8,16.1" fill="none"/><polygon points="12.2,10.5 18.7,5.9 17.7,15.2 12.2,20.7" fill="none"/><polyline points="3.8,16.1 10,12.5 17.7,15.2" fill="none" stroke="#222" stroke-width=".7"/><polyline points="10,3.4 10,12.5" fill="none" stroke="#222" stroke-width=".7"/><polygon points="10,3.4 18.7,5.9 17.7,15.2 12.2,20.7 3.8,16.1 2.6,6.8" fill="none" stroke="#222" stroke-width="1"/><polyline points="2.6,6.8 12.2,10.5 18.7,5.9" fill="none" stroke="#222" stroke-width="1"/><polyline points="12.2,10.5 12.2,20.7" fill="none" stroke="#222" stroke-width="1"/><circle cx="10" cy="3.4" r="1.3" fill="#111"/><circle cx="2.6" cy="6.8" r="1.3" fill="#111"/><circle cx="18.7" cy="5.9" r="1.3" fill="#111"/><circle cx="12.2" cy="10.5" r="1.3" fill="#111"/><circle cx="3.8" cy="16.1" r="1.3" fill="#111"/><circle cx="17.7" cy="15.2" r="1.3" fill="#111"/><circle cx="12.2" cy="20.7" r="1.3" fill="#111"/></svg>
<svg class="a" style="left:85px;top:122px" width="22" height="22" viewBox="0 0 22 22"><polygon points="10,3.4 18.7,5.9 12.2,10.5 2.6,6.8" fill="#fff"/><polygon points="2.6,6.8 12.2,10.5 12.2,20.7 3.8,16.1" fill="#fff"/><polygon points="12.2,10.5 18.7,5.9 17.7,15.2 12.2,20.7" fill="#fff"/><polygon points="10,3.4 18.7,5.9 17.7,15.2 12.2,20.7 3.8,16.1 2.6,6.8" fill="none" stroke="#333" stroke-width="1"/><polyline points="2.6,6.8 12.2,10.5 18.7,5.9" fill="none" stroke="#333" stroke-width="1"/><polyline points="12.2,10.5 12.2,20.7" fill="none" stroke="#333" stroke-width="1"/><circle cx="10" cy="3.4" r="1.3" fill="#111"/><circle cx="2.6" cy="6.8" r="1.3" fill="#111"/><circle cx="18.7" cy="5.9" r="1.3" fill="#111"/><circle cx="12.2" cy="10.5" r="1.3" fill="#111"/><circle cx="3.8" cy="16.1" r="1.3" fill="#111"/><circle cx="17.7" cy="15.2" r="1.3" fill="#111"/><circle cx="12.2" cy="20.7" r="1.3" fill="#111"/></svg>
<svg class="a" style="left:109.6px;top:122px" width="22" height="22" viewBox="0 0 22 22"><polygon points="10,3.4 18.7,5.9 12.2,10.5 2.6,6.8" fill="#f4f0c8"/><polygon points="2.6,6.8 12.2,10.5 12.2,20.7 3.8,16.1" fill="#988a6a"/><polygon points="12.2,10.5 18.7,5.9 17.7,15.2 12.2,20.7" fill="#a89a78"/><polyline points="2.96,9.59 12.2,13.56 18.4,8.69" fill="none" stroke="#c8bc98" stroke-width="1.4"/><polyline points="3.26,11.915 12.2,16.11 18.15,11.015" fill="none" stroke="#c8bc98" stroke-width="1.4"/><polyline points="3.56,14.24 12.2,18.66 17.9,13.34" fill="none" stroke="#c8bc98" stroke-width="1.4"/><polygon points="10,3.4 18.7,5.9 17.7,15.2 12.2,20.7 3.8,16.1 2.6,6.8" fill="none" stroke="#222" stroke-width="1"/><polyline points="2.6,6.8 12.2,10.5 18.7,5.9" fill="none" stroke="#222" stroke-width="1"/><polyline points="12.2,10.5 12.2,20.7" fill="none" stroke="#222" stroke-width="1"/><circle cx="10" cy="3.4" r="1.3" fill="#111"/><circle cx="2.6" cy="6.8" r="1.3" fill="#111"/><circle cx="18.7" cy="5.9" r="1.3" fill="#111"/><circle cx="12.2" cy="10.5" r="1.3" fill="#111"/><circle cx="3.8" cy="16.1" r="1.3" fill="#111"/><circle cx="17.7" cy="15.2" r="1.3" fill="#111"/><circle cx="12.2" cy="20.7" r="1.3" fill="#111"/></svg>
<svg class="a" style="left:136px;top:122px" width="22" height="22" viewBox="0 0 22 22"><polygon points="10,3.4 18.7,5.9 12.2,10.5 2.6,6.8" fill="#2a2a2a"/><polygon points="2.6,6.8 12.2,10.5 12.2,20.7 3.8,16.1" fill="#1a1a1a"/><polygon points="12.2,10.5 18.7,5.9 17.7,15.2 12.2,20.7" fill="#1a1a1a"/><polyline points="2.96,9.59 12.2,13.56 18.4,8.69" fill="none" stroke="#b8aa88" stroke-width="1.4"/><polyline points="3.26,11.915 12.2,16.11 18.15,11.015" fill="none" stroke="#b8aa88" stroke-width="1.4"/><polyline points="3.56,14.24 12.2,18.66 17.9,13.34" fill="none" stroke="#b8aa88" stroke-width="1.4"/><polygon points="10,3.4 18.7,5.9 17.7,15.2 12.2,20.7 3.8,16.1 2.6,6.8" fill="none" stroke="#000" stroke-width="1"/><polyline points="2.6,6.8 12.2,10.5 18.7,5.9" fill="none" stroke="#000" stroke-width="1"/><polyline points="12.2,10.5 12.2,20.7" fill="none" stroke="#000" stroke-width="1"/><circle cx="10" cy="3.4" r="1.3" fill="#111"/><circle cx="2.6" cy="6.8" r="1.3" fill="#111"/><circle cx="18.7" cy="5.9" r="1.3" fill="#111"/><circle cx="12.2" cy="10.5" r="1.3" fill="#111"/><circle cx="3.8" cy="16.1" r="1.3" fill="#111"/><circle cx="17.7" cy="15.2" r="1.3" fill="#111"/><circle cx="12.2" cy="20.7" r="1.3" fill="#111"/></svg>
<svg class="a" style="left:159px;top:122px" width="22" height="22" viewBox="0 0 22 22"><polygon points="10,3.4 18.7,5.9 12.2,10.5 2.6,6.8" fill="#f4f0d0"/><polygon points="2.6,6.8 12.2,10.5 12.2,20.7 3.8,16.1" fill="#5a70e0"/><polygon points="12.2,10.5 18.7,5.9 17.7,15.2 12.2,20.7" fill="#a89a78"/><polygon points="10,3.4 18.7,5.9 17.7,15.2 12.2,20.7 3.8,16.1 2.6,6.8" fill="none" stroke="#222" stroke-width="1"/><polyline points="2.6,6.8 12.2,10.5 18.7,5.9" fill="none" stroke="#222" stroke-width="1"/><polyline points="12.2,10.5 12.2,20.7" fill="none" stroke="#222" stroke-width="1"/><circle cx="10" cy="3.4" r="1.3" fill="#111"/><circle cx="2.6" cy="6.8" r="1.3" fill="#111"/><circle cx="18.7" cy="5.9" r="1.3" fill="#111"/><circle cx="12.2" cy="10.5" r="1.3" fill="#111"/><circle cx="3.8" cy="16.1" r="1.3" fill="#111"/><circle cx="17.7" cy="15.2" r="1.3" fill="#111"/><circle cx="12.2" cy="20.7" r="1.3" fill="#111"/></svg>
<div class="a" style="left:0px;top:151px;width:50px;height:51px;border-top:1px solid #c4c4c4;border-bottom:1px solid #c4c4c4;border-right:1px solid #c8c8c8"></div>
<div class="a" style="left:0px;top:152px;width:49px;height:1px;background:#fbfbfb"></div>
<svg class="a" style="left:1px;top:153px" width="22" height="22" viewBox="0 0 22 22"><path d="M9 6 L9 16.5 L11.3 14.3 L13 18 L14.8 17.2 L13.1 13.6 L16 13.4 Z" fill="#111"/><path d="M7 9 L7 17 L10 19" stroke="#c8c8c8" stroke-width="1" fill="none"/><path d="M10 17 L13 19" stroke="#999" stroke-width="1"/></svg>
<svg class="a" style="left:26px;top:153px" width="22" height="22" viewBox="0 0 22 22"><path d="M3 9 L10 5 L18 8 L18 14 L11 19 L4 15 Z" fill="#e8e8e8" stroke="#b0b0b0" stroke-width="1"/><path d="M6 8 L11 5 L16 8 L11 12 Z" fill="#fff" stroke="#a8a8a8" stroke-width=".9"/><path d="M4 12 L11 16 L18 11" stroke="#c0c0c0" fill="none" stroke-width="1"/><path d="M10 1 V6" stroke="#c8c8c8" stroke-width="1"/></svg>
<svg class="a" style="left:1px;top:178px" width="22" height="22" viewBox="0 0 22 22"><path d="M9 8 C12 6 17 6 19 9 L18 17 C16 20 11 20 9 17 Z" fill="#d0c8a8" stroke="#222" stroke-width="1.4"/><ellipse cx="14" cy="8.5" rx="5" ry="2.2" fill="#888070" stroke="#222" stroke-width="1"/><path d="M10 7 C9 2 17 1 19 6" fill="none" stroke="#111" stroke-width="1.7"/><path d="M10 7 C6 7 2 11 2 16 C2 19 4 20 5 19 C4 15 7 11 11 10Z" fill="#e8f020" stroke="#404010" stroke-width=".8"/></svg>
<svg class="a" style="left:26px;top:178px" width="22" height="22" viewBox="0 0 22 22"><path d="M3 15 L14 3 L18 3 L8 19 Z" fill="#f4a0b8" stroke="#c06880" stroke-width="1"/><path d="M14 3 L18 3 L19.5 5 L9.5 20 L8 19 Z" fill="#d06080"/><path d="M8 19 L19.5 5 L20 8 L10 20.5Z" fill="#8a5a68"/><path d="M10 9 L14 5" stroke="#b03058" stroke-width="1.6"/><path d="M18 8 L21 10 L13 20" stroke="#c0c8c8" stroke-width="1" fill="none"/></svg>
<div class="a" style="left:0px;top:212px;width:49px;height:1px;background:#c4c4c4"></div>
<div class="a" style="left:0px;top:217px;width:50px;height:75px;border-top:1px solid #c4c4c4;border-bottom:1px solid #c4c4c4;border-right:1px solid #c8c8c8"></div>
<div class="a" style="left:0px;top:218px;width:49px;height:1px;background:#fbfbfb"></div>
<svg class="a" style="left:1px;top:219px" width="22" height="22" viewBox="0 0 22 22"><path d="M3 4 L20 2.5 L21 19.5 L4 20.5 Z" fill="#a88a6a" stroke="#3a3026" stroke-width="1.1"/><path d="M8 5 V19 M12.5 4.5 V19.5 M16.5 4 V19" stroke="#ae9070" stroke-width="1"/><circle cx="3" cy="4" r="1.1" fill="#222"/><circle cx="20" cy="2.5" r="1.1" fill="#222"/><circle cx="21" cy="19.5" r="1.1" fill="#222"/><circle cx="4" cy="20.5" r="1.1" fill="#222"/></svg>
<svg class="a" style="left:26px;top:219px" width="22" height="22" viewBox="0 0 22 22"><path d="M2.5 20 L4.5 15.5 L17 2.5 L20 5.5 L7.5 18 Z" fill="#d81820"/><path d="M2.5 20 L4.5 15.5 L7.5 18Z" fill="#201010"/><path d="M5 15 L17 3" stroke="#ff6070" stroke-width=".8"/><path d="M15 4 L18.5 7.5" stroke="#6a2020" stroke-width="1.2"/><path d="M7 19.5 L20 14" stroke="#a0b4b4" stroke-width="1.5"/></svg>
<svg class="a" style="left:1px;top:244px" width="22" height="22" viewBox="0 0 22 22"><circle cx="11" cy="11" r="9.2" fill="#a88a68" stroke="#4a3c2c" stroke-width="1.3"/><circle cx="11" cy="11" r="6.5" fill="#b8946c" opacity=".7"/></svg>
<svg class="a" style="left:26px;top:244px" width="22" height="22" viewBox="0 0 22 22"><path d="M6 20 C1 14 2 5 9 3 C13 2 17 3 19 6" fill="none" stroke="#1a1a1a" stroke-width="1.8"/><path d="M6 9 C9 7 13 7 16 7" stroke="#aaa" stroke-width="1.2" fill="none"/></svg>
<svg class="a" style="left:1px;top:268px" width="22" height="22" viewBox="0 0 22 22"><path d="M2 4 L20 4 L11 20Z" fill="#a08a6a" stroke="#4a3c2c" stroke-width="1.2"/></svg>
<svg class="a" style="left:26px;top:268px" width="22" height="22" viewBox="0 0 22 22"><path d="M5 15 C2 12 4 8 8 9 C11 10 10 14 8 16 C6 18 3 19 4 21 M8 16 C11 20 17 19 19 15 C21 11 18 6 13 6 C9 6 10 10 13 11 C16 12 17 9 15 8 M2 9 C5 4 12 3 16 4" fill="none" stroke="#111" stroke-width="1.4"/></svg>
<div class="a" style="left:0px;top:307px;width:49px;height:1px;background:#c4c4c4"></div>
<div class="a" style="left:0px;top:312px;width:50px;height:75px;border-top:1px solid #c4c4c4;border-bottom:1px solid #c4c4c4;border-right:1px solid #c8c8c8"></div>
<div class="a" style="left:0px;top:313px;width:49px;height:1px;background:#fbfbfb"></div>
<svg class="a" style="left:1px;top:314px" width="22" height="22" viewBox="0 0 22 22"><path d="M6.7 1.9 L13.0 6.7 L6.5 9.8 Z M19.4 6.4 L15.2 12.8 L11.8 6.5 Z M17.2 19.4 L10.0 15.7 L15.8 11.4 Z M1.5 14.9 L6.8 8.8 L9.5 15.5 Z " fill="#e01018" stroke="#901018" stroke-width=".5"/><circle cx="11" cy="11" r="1.5" fill="#803050"/></svg>
<svg class="a" style="left:26px;top:314px" width="22" height="22" viewBox="0 0 22 22"><path d="M2 14 L10 11 L19 13 L12 17 Z" fill="#b8aa88" stroke="#4a4030" stroke-width="1"/><path d="M2 14 L12 17 L12 20 L2 17 Z" fill="#6a5e48"/><path d="M12 17 L19 13 L19 16 L12 20Z" fill="#857860"/><path d="M11 2 L15 8 L12.5 8 L12.5 14 L9.5 14 L9.5 8 L7 8 Z" fill="#e81010"/></svg>
<svg class="a" style="left:1px;top:339px" width="22" height="22" viewBox="0 0 22 22"><path d="M4.5 10.5 C5 5 9 3 12 3.3 C15 3.5 17 5 18 7" fill="none" stroke="#c81020" stroke-width="2.4"/><path d="M18 12.5 C17.5 17 14 19.5 10.5 19 C8.5 18.7 7 17.5 6 16" fill="none" stroke="#c81020" stroke-width="2.4"/><path d="M18.5 3 L21 10 L13.5 8.5Z M2 12 L9.5 13 L4.3 19.5Z" fill="#d81020" stroke="#901018" stroke-width=".5"/></svg>
<svg class="a" style="left:26px;top:339px" width="22" height="22" viewBox="0 0 22 22"><path d="M4 15 C2 9 7 3 13 4" fill="none" stroke="#d01818" stroke-width="2.4"/><path d="M5 14 L14 11 L19 15 L10 19Z" fill="#c0a080" stroke="#403020" stroke-width="1"/><path d="M11 1 L17 5 L11 8Z" fill="#d01818"/><path d="M10 9 L13 13" stroke="#d01818" stroke-width="2"/></svg>
<svg class="a" style="left:1px;top:362px" width="22" height="22" viewBox="0 0 22 22"><path d="M2 6 L15 3 L19 17 L5 20Z" fill="#f8f8f8" stroke="#555" stroke-width="1"/><path d="M10.5 11 L17 9.5 L19 17 L12 18.5Z" fill="#807060"/><path d="M4 6 L11 7 L6 12Z" fill="#e01818"/><path d="M6 8 L12 14" stroke="#e01818" stroke-width="1.8"/></svg>
<svg class="a" style="left:26px;top:362px" width="22" height="22" viewBox="0 0 22 22"><path d="M5 20 C2 13 4 5 12 3 C15 2 18 3 20 4" fill="none" stroke="#111" stroke-width="1.6"/><path d="M9 17 C8 12 11 9 16 9" fill="none" stroke="#222" stroke-width="1.5"/><path d="M8 4 L14 6 L12 8 L15 11 L10 11 L9 8Z" fill="#e01818"/></svg>
<div class="a" style="left:0px;top:402px;width:49px;height:1px;background:#c4c4c4"></div>
<div class="a" style="left:0px;top:407px;width:50px;height:75px;border-top:1px solid #c4c4c4;border-bottom:1px solid #c4c4c4;border-right:1px solid #c8c8c8"></div>
<div class="a" style="left:0px;top:408px;width:49px;height:1px;background:#fbfbfb"></div>
<svg class="a" style="left:1px;top:410px" width="22" height="22" viewBox="0 0 22 22"><path d="M9 4 L17 2 L20 6 L19 15 L11 16 L8 10Z" fill="#2a2a22"/><circle cx="14.5" cy="9" r="3.5" fill="#f0d018"/><circle cx="14.5" cy="9" r="1.3" fill="#907010"/><path d="M10 12 L3 19" stroke="#202010" stroke-width="3.4"/><path d="M10 12 L3 19" stroke="#f0d020" stroke-width="1.8" stroke-dasharray="1.6,1.1"/><ellipse cx="15" cy="17.5" rx="4.5" ry="2" fill="#a8b8c8" opacity=".7"/><path d="M8 7 L11 5" stroke="#d8c010" stroke-width="2"/></svg>
<svg class="a" style="left:1px;top:433.5px" width="22" height="22" viewBox="0 0 22 22"><path d="M2 20 L2 10 C4 4 12 1 20 5 Z" fill="#f0c828" stroke="#907010" stroke-width="1.3"/><path d="M5 16 C6 11 10 8 15 7" fill="none" stroke="#907010" stroke-width="1.2"/><path d="M2 20 L9 12" stroke="#907010" stroke-width="1"/></svg>
<svg class="a" style="left:26px;top:433.5px" width="22" height="22" viewBox="0 0 22 22"><rect x="5" y="2" width="16" height="9" fill="#fff" stroke="#222" stroke-width="1.4"/><text x="6.6" y="9.6" font-size="6.8" font-weight="bold" font-family="Liberation Sans" fill="#111">ABC</text><path d="M5 8 V19" stroke="#222" stroke-width="1"/><path d="M3 16 L5 21 L7 16Z" fill="#111"/><path d="M7 12 H21" stroke="#888" stroke-width="1"/></svg>
<svg class="a" style="left:1px;top:458px" width="22" height="22" viewBox="0 0 22 22"><path d="M2 15 L20 7" stroke="#20a030" stroke-width="2.4"/><path d="M3 8 L19 19" stroke="#e01818" stroke-width="2.4"/><path d="M9.5 4 L9.5 20" stroke="#1820c0" stroke-width="2.4"/><path d="M6.5 7 L9.5 1 L12.5 7Z" fill="#1820c0"/></svg>
<svg class="a" style="left:26px;top:458px" width="22" height="22" viewBox="0 0 22 22"><path d="M3 20 L11 2 L14 2 L19 20 L15 20 L13.5 14 L9 14 L7 20Z" fill="#3a3024" stroke="#111" stroke-width="1"/><path d="M4.5 19.5 L12 3.5 M14 4 L18 19" stroke="#d8b060" stroke-width="1"/><path d="M10 12 L13 12 L12 7Z" fill="#f0f0f0"/><path d="M17 8 L21 6 L19 14" fill="none" stroke="#bbb" stroke-width=".8"/></svg>
<div class="a" style="left:25px;top:409px;width:24px;height:24px;background:#f8f8f8;border:1px solid #a8a8a8;border-right-color:#fff;border-bottom-color:#fff"></div>
<svg class="a" style="left:26px;top:410px" width="22" height="22" viewBox="0 0 22 22"><path d="M5 15 L16 4" stroke="#111" stroke-width="1.2"/><path d="M9 3 L20 14 M3 14 L12 21" stroke="#111" stroke-width="1.3"/><path d="M16 4 L11 5.5 L14.5 9Z M5 15 L6.5 10 L10 13.5Z" fill="#111"/><path d="M2 6 C2 2 7 1 8 4 C9 7 5 9 4 7" fill="none" stroke="#111" stroke-width="1.3"/><path d="M3 4 L6 6" stroke="#608060" stroke-width="1"/></svg>
<div class="a" style="left:0px;top:497px;width:49px;height:1px;background:#c4c4c4"></div>
<div class="a" style="left:0px;top:502px;width:50px;height:29px;border-top:1px solid #c4c4c4;border-bottom:1px solid #c4c4c4;border-right:1px solid #c8c8c8"></div>
<div class="a" style="left:0px;top:503px;width:49px;height:1px;background:#fbfbfb"></div>
<svg class="a" style="left:1px;top:505px" width="22" height="22" viewBox="0 0 22 22"><path d="M2 5 L11 3 L12 12 L3 14Z" fill="#b0a488" stroke="#3a3226" stroke-width="1.2"/><path d="M7 9 L16 7 L17 17 L8 19Z" fill="#a89c80" stroke="#3a3226" stroke-width="1.4"/><path d="M9 10 L15 9" stroke="#c8bca0" stroke-width="1"/></svg>
<div class="a" style="left:26px;top:505px;width:1px;height:22px;background:#c8c8c8"></div>
<div class="a" style="left:0px;top:531px;width:50px;height:75px;border-top:1px solid #c4c4c4;border-bottom:1px solid #c4c4c4;border-right:1px solid #c8c8c8"></div>
<div class="a" style="left:0px;top:532px;width:49px;height:1px;background:#fbfbfb"></div>
<svg class="a" style="left:1px;top:534px" width="22" height="22" viewBox="0 0 22 22"><path d="M2 5 L11 4 L12 14 L3 15Z" fill="#f4f4f4" stroke="#888" stroke-width="1"/><path d="M7 9 L17 8 L18 19 L8 20Z" fill="#ececec" stroke="#888" stroke-width="1.1"/><path d="M9 11 H16 M9 17 H16" stroke="#aaa" stroke-width="1"/><rect x="8" y="9" width="4" height="5" fill="#fff" stroke="#999" stroke-width=".6"/></svg>
<svg class="a" style="left:26px;top:534px" width="22" height="22" viewBox="0 0 22 22"><path d="M2 5 L12 4 L13 14 L3 15Z" fill="#e4e4e4" stroke="#888" stroke-width="1"/><path d="M7 9 L17 8 L18 19 L8 20Z" fill="#c8c8c8" stroke="#888" stroke-width="1.1"/><path d="M9 12 H16 M9 15 H16" stroke="#a8a8a8" stroke-width="1"/></svg>
<svg class="a" style="left:1px;top:558px" width="22" height="22" viewBox="0 0 22 22"><path d="M2 5 L11 4 L12 14 L3 15Z" fill="#f4f4f4" stroke="#888" stroke-width="1"/><path d="M7 9 L17 8 L18 19 L8 20Z" fill="#ececec" stroke="#888" stroke-width="1.1"/><path d="M9 11 H16 M9 17 H16" stroke="#aaa" stroke-width="1"/><rect x="8" y="9" width="4" height="5" fill="#fff" stroke="#999" stroke-width=".6"/></svg>
<svg class="a" style="left:26px;top:558px" width="22" height="22" viewBox="0 0 22 22"><path d="M2 5 L12 4 L13 14 L3 15Z" fill="#e4e4e4" stroke="#888" stroke-width="1"/><path d="M7 9 L17 8 L18 19 L8 20Z" fill="#c8c8c8" stroke="#888" stroke-width="1.1"/><path d="M9 12 H16 M9 15 H16" stroke="#a8a8a8" stroke-width="1"/></svg>
<svg class="a" style="left:1px;top:580px" width="22" height="22" viewBox="0 0 22 22"><path d="M2 5 L11 4 L12 14 L3 15Z" fill="#f4f4f4" stroke="#888" stroke-width="1"/><path d="M7 9 L17 8 L18 19 L8 20Z" fill="#ececec" stroke="#888" stroke-width="1.1"/><path d="M9 11 H16 M9 17 H16" stroke="#aaa" stroke-width="1"/><rect x="8" y="9" width="4" height="5" fill="#fff" stroke="#999" stroke-width=".6"/></svg>
<div class="a" style="left:0px;top:610px;width:50px;height:99px;border-top:1px solid #c4c4c4;border-bottom:1px solid #c4c4c4;border-right:1px solid #c8c8c8"></div>
<div class="a" style="left:0px;top:611px;width:49px;height:1px;background:#fbfbfb"></div>
<svg class="a" style="left:1px;top:613px" width="22" height="22" viewBox="0 0 22 22"><path d="M4 8 C6 4 11 8 15 11 C19 14 21 17 18 19 C15 21 7 16 4 13 C2 11 2 9 4 8Z" fill="none" stroke="#0a0a18" stroke-width="1.9" transform="rotate(-8 11 12)"/><path d="M10 2 C8 6 9 10 11 14 C12 17 13 19 15 21" fill="none" stroke="#0a0a18" stroke-width="1.7"/><path d="M6 10 L12 13 L14 17 L9 18 L5 14Z" fill="#3080f0"/><path d="M13 3 L18 7 L19 10 L15 11 L12 8Z" fill="#2a70e0"/><path d="M16 11 L19 15 L17 19" fill="none" stroke="#3050a0" stroke-width="1.5"/></svg>
<svg class="a" style="left:26px;top:613px" width="22" height="22" viewBox="0 0 22 22"><path d="M2 21 L6 13 C6 9 8 6 10 5 C11 4 13 4 14 5 C14 3 16 3 17 5 C18 3 20 4 20 6 L17 11 C18 13 20 13 21 15 L13 18 L10 21" fill="#fff" stroke="#2a2a2a" stroke-width="1.1" stroke-linejoin="round"/><path d="M11 6 L13 10 M14 5 L16 9 M17 5 L18 8" stroke="#2a2a2a" stroke-width="1.2"/></svg>
<svg class="a" style="left:1px;top:636px" width="22" height="22" viewBox="0 0 22 22"><path d="M12 12 L18.5 18.5" stroke="#111" stroke-width="2.8" stroke-linecap="round"/><circle cx="8.5" cy="8.5" r="5" fill="#88b4cc" stroke="#142030" stroke-width="2"/><circle cx="7.5" cy="7.5" r="1.6" fill="#c8e0ec"/></svg>
<svg class="a" style="left:26px;top:636px" width="22" height="22" viewBox="0 0 22 22"><path d="M12 12 L18.5 18.5" stroke="#111" stroke-width="2.8" stroke-linecap="round"/><circle cx="8.5" cy="8.5" r="5" fill="#88b4cc" stroke="#142030" stroke-width="2"/><path d="M14 3 L18 4 L20 14 M5 19 L12 20" fill="none" stroke="#2838b0" stroke-width="1.6" stroke-dasharray="2.2,1.2"/></svg>
<svg class="a" style="left:1px;top:659px" width="22" height="22" viewBox="0 0 22 22"><path d="M10 11 L18 19" stroke="#111" stroke-width="2.8" stroke-linecap="round"/><circle cx="7" cy="7" r="5" fill="#88b4cc" stroke="#142030" stroke-width="2"/><path d="M1 11 L8 5 L10 8 L19 6 L17 13 L12 15 L8 17Z" fill="#3a70e0" stroke="#1a3080" stroke-width=".6"/></svg>
<svg class="a" style="left:26px;top:659px" width="22" height="22" viewBox="0 0 22 22"><path d="M12 11 L4 19" stroke="#111" stroke-width="2.8" stroke-linecap="round"/><circle cx="15" cy="7" r="5" fill="#88b4cc" stroke="#142030" stroke-width="2"/><path d="M21 11 L14 5 L12 8 L3 6 L5 13 L10 15 L14 17Z" fill="#3a70e0" stroke="#1a3080" stroke-width=".6"/></svg>
<svg class="a" style="left:1px;top:682px" width="22" height="22" viewBox="0 0 22 22"><path d="M12 12 L18 18" stroke="#111" stroke-width="2.6" stroke-linecap="round"/><circle cx="10" cy="10" r="4.5" fill="#88b4cc" stroke="#142030" stroke-width="2"/><path d="M1 1 L7 3 L3 7Z M19 1 L17 7 L13 3Z M1 19 L3 13 L7 17Z M19 19 L13 17 L17 13Z" fill="#4a78c8"/></svg>
<div class="a" style="left:1535px;top:147px;width:1px;height:636px;background:#fafafa"></div>
<div class="a" style="left:49px;top:147px;width:1px;height:635px;background:#c8c8c8"></div>
<!-- VIEWPORT -->
<div id="vp" class="a">
  <div class="a" style="left:5px;top:2px;font-size:13px;color:#101018;line-height:16px;-webkit-text-stroke:0.2px #101018">Top</div>
<svg class="a" style="left:-51px;top:-148px" width="1536" height="835" viewBox="0 0 1536 835" shape-rendering="crispEdges">
  <rect x="943" y="454" width="592" height="329" fill="#ffffff"/>
  <rect x="942" y="279" width="105" height="175" fill="#a9541a"/>
  <rect x="942" y="349" width="593" height="105" fill="#a9541a"/>
  <rect x="942" y="278" width="105" height="1" fill="#4a2410"/>
  <rect x="942" y="279" width="1" height="504" fill="#3a3838"/>
  <rect x="942" y="348" width="105" height="1" fill="#5a1e0a"/>
  <rect x="1047" y="348" width="488" height="1" fill="#b02020"/>
  <rect x="942" y="453" width="593" height="1" fill="#3a2418"/>
  <rect x="1023" y="148" width="1" height="131" fill="#20242e"/>
  <rect x="1046" y="148" width="1" height="201" fill="#30c040"/>
  <line x1="1046.5" y1="349" x2="1046.5" y2="453" stroke="#2a2410" stroke-width="1" stroke-dasharray="2,1"/>
  <line x1="1046.5" y1="455" x2="1046.5" y2="783" stroke="#80b890" stroke-width="1" stroke-dasharray="1,2"/>
  <rect x="50" y="436" width="892" height="2" fill="#545a78"/>
  <rect x="50" y="331" width="62" height="1" fill="#2c3040"/>
  <rect x="112" y="331" width="1" height="452" fill="#20242e"/>
  <line x1="50" y1="349.5" x2="942" y2="349.5" stroke="#767c9c" stroke-width="1" stroke-dasharray="1.8,1.5" shape-rendering="geometricPrecision"/>
  
  <rect x="924" y="436" width="1" height="347" fill="#2a2e3e"/>
  <rect x="930" y="394" width="1" height="389" fill="#5a5e70"/>
  <rect x="924" y="453" width="18" height="1" fill="#3a3e50"/>
  <rect x="124" y="397" width="375" height="2" fill="#6a7088"/>
  <rect x="543" y="397" width="376" height="2" fill="#6a7088"/>
  <rect x="124" y="523" width="358" height="2" fill="#6a7088"/>
  <rect x="555" y="523" width="358" height="2" fill="#6a7088"/>
  <g shape-rendering="geometricPrecision">
  <path d="M113 398 L124 394.5 L124 401.5 Z" fill="#2e3240"/>
  <path d="M930 398 L919 394.5 L919 401.5 Z" fill="#2e3240"/>
  <path d="M113 524 L124 520.5 L124 527.5 Z" fill="#2e3240"/>
  <path d="M924 524 L913 520.5 L913 527.5 Z" fill="#2e3240"/>
  <line x1="1047" y1="349" x2="1488" y2="148" stroke="#3a44a0" stroke-width="1"/>
  </g>
</svg>
<div class="a" style="left:450px;top:243px;width:40px;font-size:16px;line-height:18px;color:#242a3a;white-space:nowrap">2' 11"</div>
<div class="a" style="left:434px;top:368px;font-size:16px;line-height:18px;color:#242a3a;white-space:nowrap">2' 10 3/4"</div>

</div>
<div id="status" class="a"></div>
<div class="a" style="left:3px;top:784px;width:231px;height:29px;border-left:1px solid #b8b8b8;border-bottom:1px solid #c4c4c4;border-right:1px solid #c4c4c4"></div>
<div class="a" style="left:22px;top:791px;font-size:10.2px;line-height:13px;color:#1a1a1a">Measurements</div>
<div class="a" style="left:92px;top:786px;width:138px;height:22px;border-top:2px solid #909090;border-left:2px solid #909090;border-right:1px solid #e4e4e4;border-bottom:1px solid #e4e4e4;background:#f0f0f0"></div>
<div class="a" style="left:0px;top:812px;width:1536px;height:1px;background:#c8c8c8"></div>
<div class="a" style="left:0px;top:813px;width:1536px;height:1px;background:#fafafa"></div>
<svg class="a" style="left:1.1px;top:816px" width="18" height="18" viewBox="0 0 18 18"><circle cx="9" cy="9" r="7.6" fill="#f2e2c0" stroke="#6a5020" stroke-width="1.7"/><text x="5.8" y="12.5" font-size="9" font-weight="bold" font-family="Liberation Sans" fill="#d8b890">?</text></svg>
<svg class="a" style="left:23.9px;top:816px" width="18" height="18" viewBox="0 0 18 18"><circle cx="9" cy="9" r="7.6" fill="#f2e2c0" stroke="#6a5020" stroke-width="1.7"/><circle cx="9" cy="5" r="1.5" fill="#888"/><path d="M7.5 7 H10.5 V12 H9.8 V16 H8.2 V12 H7.5Z" fill="#888"/><path d="M3 7 C3 10 4 12 5 13" stroke="#e8e060" stroke-width="1.5" fill="none"/></svg>
<svg class="a" style="left:46.3px;top:816px" width="18" height="18" viewBox="0 0 18 18"><circle cx="9" cy="9" r="7.6" fill="#f2e2c0" stroke="#6a5020" stroke-width="1.7"/><path d="M12 6 C10 3.5 5.5 4.5 5.5 9 C5.5 13 10 14 12 12" fill="none" stroke="#e0e0c8" stroke-width="1.8"/><circle cx="12.5" cy="12" r="1" fill="#888"/></svg>
<div class="a" style="left:70px;top:816px;width:1px;height:18px;background:#c0c0c0"></div>
<svg class="a" style="left:76.5px;top:816.5px" width="18" height="18" viewBox="0 0 18 18"><circle cx="9" cy="9" r="7.8" fill="#eef4fa" stroke="#1a3050" stroke-width="1.6"/><text x="4.6" y="14" font-size="12" font-weight="bold" font-family="Liberation Sans" fill="#111">?</text></svg>
<div class="a" style="left:17px;top:830px;width:26px;height:12px;border-radius:50%;background:#a8b8c8;border:1px solid #8090a0"></div>
<div class="a" style="left:99px;top:819px;font-size:10.7px;line-height:13px;color:#1a1a1a;white-space:nowrap">Select an edge, curve, or two points to dimension, or drag one to move.</div>
</body></html>
